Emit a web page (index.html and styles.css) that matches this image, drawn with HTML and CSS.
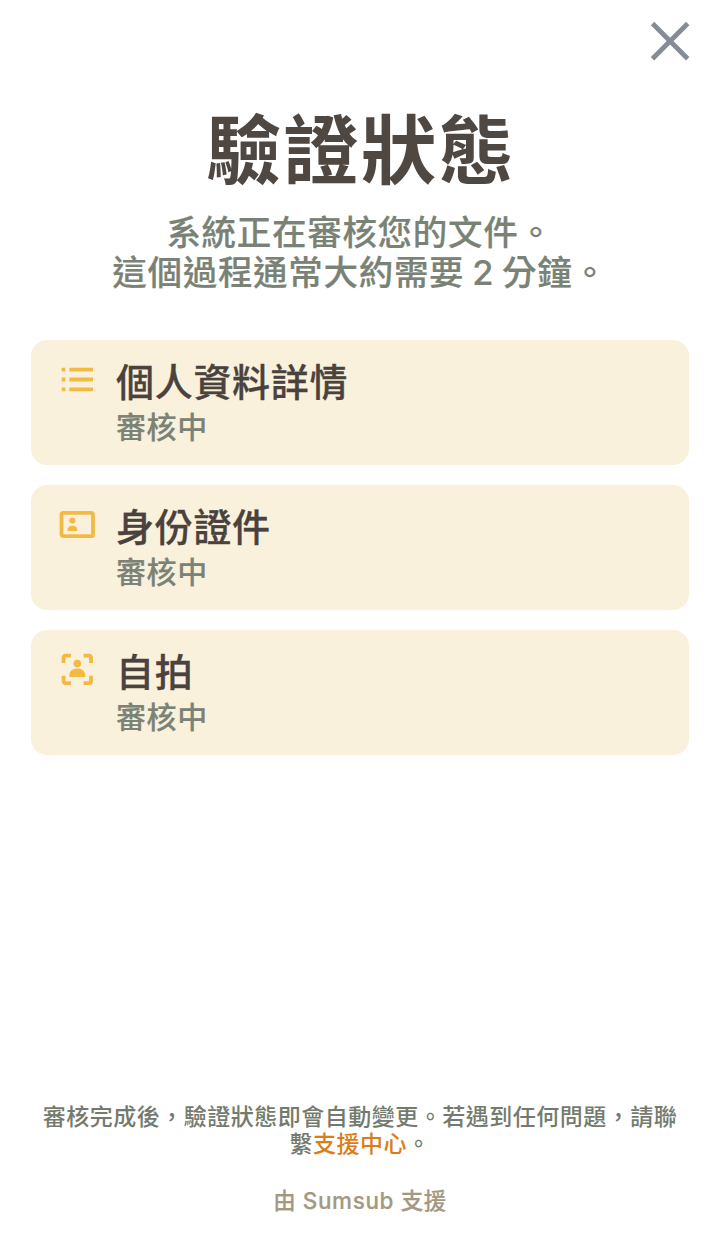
FILE: index.html
```html
<!DOCTYPE html>
<html lang="zh-Hant">
<head>
<meta charset="utf-8">
<title>驗證狀態</title>
<link rel="stylesheet" href="styles.css">
</head>
<body>
<main class="page">
  <header class="topbar">
    <button class="close" aria-label="關閉"><svg width="40" height="40" viewBox="0 0 40 40"><path d="M2.500 2.500 37.700 37.700M37.700 2.500 2.500 37.700"/></svg></button>
  </header>
  <h1 class="title">驗證狀態</h1>
  <p class="subtitle">系統正在審核您的文件。<br>這個過程通常大約需要 2 分鐘。</p>
  <section class="steps">
    <article class="step">
      <svg class="icon" width="36" height="36" viewBox="0 0 36 36"><path d="M2.700 7.700h3.700M2.700 17.500h3.700M2.700 27.300h3.700M10.300 7.700H34M10.300 17.500H34M10.300 27.300H34"/></svg>
      <div class="body"><h2 class="name">個人資料詳情</h2><p class="state">審核中</p></div>
    </article>
    <article class="step">
      <svg class="icon" width="36" height="36" viewBox="0 0 36 36"><rect x="2.500" y="5.900" width="31.500" height="23.300" rx="2"/><g class="solid"><circle cx="13.300" cy="13.600" r="3"/><path d="M8.500 24v-1.200c0-2.700 2-4.100 4.900-4.100s4.900 1.400 4.900 4.100V24z"/></g></svg>
      <div class="body"><h2 class="name">身份證件</h2><p class="state">審核中</p></div>
    </article>
    <article class="step">
      <svg class="icon" width="36" height="36" viewBox="0 0 36 36"><path d="M4.600 11V5.600a2 2 0 0 1 2-2H12M24.600 3.600H30a2 2 0 0 1 2 2V11M32 23.700v5.400a2 2 0 0 1-2 2h-5.400M12 31.100H6.600a2 2 0 0 1-2-2v-5.400"/><g class="solid"><circle cx="18.300" cy="11.600" r="3.800"/><path d="M10.400 25v-1.800c0-4.200 3.200-6.700 7.900-6.700s7.900 2.500 7.900 6.700V25z"/></g></svg>
      <div class="body"><h2 class="name">自拍</h2><p class="state">審核中</p></div>
    </article>
  </section>
  <footer class="footer">
    <p class="note">審核完成後，驗證狀態即會自動變更。若遇到任何問題，請聯<br>繫<a class="link">支援中心</a>。</p>
    <p class="powered">由 Sumsub 支援</p>
  </footer>
</main>
</body>
</html>
```

FILE: styles.css
```css
* { box-sizing: border-box; }
body { margin: 0; background: #fff; font-family: Inter, "Noto Sans CJK TC", sans-serif; }
h1, h2, p { margin: 0; }
.page { height: 1242px; display: flex; flex-direction: column; }
.topbar { display: flex; justify-content: flex-end; padding: 21px 30px 0 0; }
.close { padding: 0; border: 0; background: none; height: 40px; }
.close svg { display: block; fill: none; stroke: #868b98; stroke-width: 4.8; }
.title { margin-top: 37px; padding-left: 2px; text-align: center; font-size: 75px; letter-spacing: 2.400px; line-height: 106px; font-weight: 700; color: #4f4842; white-space: nowrap; }
.subtitle { margin-top: 9px; text-align: center; font-size: 34.500px; letter-spacing: 0.700px; word-spacing: -2px; line-height: 40px; font-weight: 500; color: #7a8275; -webkit-text-stroke: 0.200px; white-space: nowrap; }
.steps { display: flex; flex-direction: column; gap: 20px; padding: 0 31px; margin-top: 47px; }
.step { height: 125px; display: flex; gap: 21px; padding: 22px 28px; border-radius: 16px; background: #faf1dd; }
.icon { flex: none; fill: none; stroke: #f2ba45; stroke-width: 3.800; }
.solid { fill: #f2ba45; stroke: none; }
.name { font-size: 38px; letter-spacing: 0.700px; line-height: 40px; font-weight: 500; color: #4a423d; -webkit-text-stroke: 0.300px; white-space: nowrap; }
.state { margin-top: 8px; font-size: 30px; letter-spacing: 0.600px; line-height: 34px; font-weight: 500; color: #7a8375; -webkit-text-stroke: 0.200px; }
.footer { margin-top: auto; padding-bottom: 27px; text-align: center; font-weight: 500; }
.note { font-size: 23px; letter-spacing: 0.500px; line-height: 27px; color: #747b6e; white-space: nowrap; }
.link { color: #dc7c16; }
.powered { margin-top: 29px; font-size: 22.500px; letter-spacing: 0.600px; line-height: 28px; color: #a39881; -webkit-text-stroke: 0.200px; }
```
